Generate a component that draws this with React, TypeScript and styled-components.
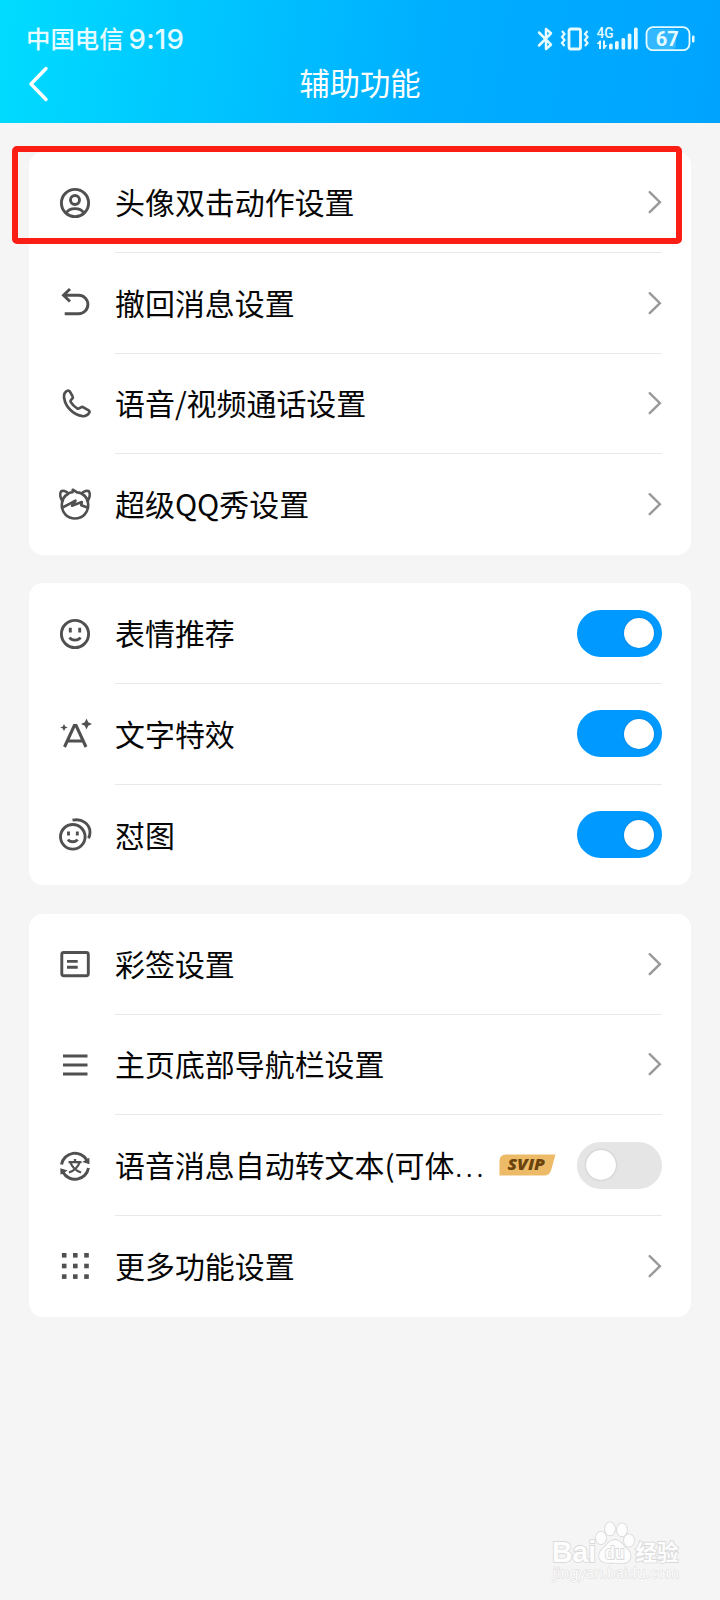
import React from 'react';
import styled, { createGlobalStyle } from 'styled-components';

const GlobalStyle = createGlobalStyle`
  * { box-sizing: border-box; }
  body {
    margin: 0;
    background: #f5f5f5;
    font-family: "Noto Sans CJK SC", "Noto Sans", sans-serif;
  }
`;

const Screen = styled.main`
  position: relative;
  width: 720px;
  height: 1600px;
  overflow: hidden;
  background: #f5f5f5;
`;

const Header = styled.header`
  height: 123px;
  color: #fff;
  background: linear-gradient(98deg, #00dcff 0%, #00c8ff 25%, #00adff 62%, #00a4ff 100%);
`;

const StatusBar = styled.div`
  display: flex;
  align-items: center;
  justify-content: space-between;
  height: 54px;
  padding: 24px 25px 0 26px;
  color: #e6fbff;
`;

const Carrier = styled.div`
  display: flex;
  align-items: center;
  height: 30px;
  padding-bottom: 2px;
  font-size: 24.4px;
  font-weight: 500;
  line-height: 30px;
`;

const Clock = styled.span`
  margin-left: 5px;
  font: 500 27.6px/30px Inter, sans-serif;
  padding-top: 2px;
  letter-spacing: 0.2px;
`;

const StatusIcons = styled.svg`
  width: 160px;
  height: 30px;
`;

const NavBar = styled.div`
  display: grid;
  grid-template-columns: 60px 1fr 60px;
  align-items: center;
  height: 60px;
`;

const BackButton = styled.button`
  display: flex;
  padding: 0 0 0 27px;
  border: 0;
  background: none;
  color: #fff;
`;

const Title = styled.h1`
  margin: 0;
  padding-bottom: 4px;
  font-size: 30.3px;
  font-weight: 400;
  line-height: 40px;
  text-align: center;
`;

const Groups = styled.div`
  display: flex;
  flex-direction: column;
  gap: 28.6px;
  padding: 29.3px 29px 0;
`;

const Card = styled.section`
  border-radius: 14px;
  background: #fff;
`;

const Row = styled.div`
  display: flex;
  align-items: center;
  height: 100.65px;
  padding-left: 28px;
`;

const RowIcon = styled.svg`
  flex: none;
  width: 36px;
  height: 36px;
  margin-right: 22px;
  fill: none;
  stroke: #505050;
  stroke-width: 2.9;
`;

const RowBody = styled.div<{ $last: boolean }>`
  display: flex;
  flex: 1;
  align-items: center;
  height: 100%;
  margin-right: 29px;
  border-bottom: 1px solid ${(p) => (p.$last ? 'transparent' : '#e9e9eb')};
`;

const Label = styled.span`
  flex: 1;
  padding-bottom: 2px;
  font-size: 29.95px;
  line-height: 44px;
  color: #060606;
  white-space: nowrap;
`;

const Dots = styled.span`
  margin-left: 1px;
  font-family: "Noto Sans", sans-serif;
  font-size: 24px;
  line-height: 1;
  letter-spacing: 4.2px;
`;

const Switch = styled.span<{ $on: boolean }>`
  display: flex;
  align-items: center;
  justify-content: ${(p) => (p.$on ? 'flex-end' : 'flex-start')};
  width: 85px;
  height: 47px;
  padding: 0 8px 0 8.5px;
  border-radius: 24px;
  background: ${(p) => (p.$on ? '#0099ff' : '#e5e5e5')};
`;

const Knob = styled.span`
  width: 30px;
  height: 30px;
  border-radius: 50%;
  background: #fff;
  box-shadow: 0 0 2px rgba(0, 0, 0, 0.25);
`;

const Badge = styled.svg`
  width: 57px;
  height: 22px;
  margin-right: 21px;
`;

const Highlight = styled.div`
  position: absolute;
  left: 12px;
  top: 146px;
  width: 670px;
  height: 98px;
  border: 6px solid #fa1e14;
  border-radius: 5px;
`;

const Watermark = styled.svg`
  position: absolute;
  left: 540px;
  top: 1510px;
  width: 150px;
  height: 75px;
`;

type IconName =
  | 'avatar' | 'undo' | 'phone' | 'show' | 'smile' | 'effect'
  | 'meme' | 'card' | 'menu' | 'voice' | 'grid';

const gridColumns = [7.2, 18.3, 29.5];
const gridRows = [7.3, 18, 28.6];

const icons: Record<IconName, React.ReactNode> = {
  avatar: (
    <>
      <circle cx="18" cy="18" r="13.6" />
      <circle cx="18" cy="15" r="4.5" />
      <path d="M9.2 28c1.6-3 5-4.400 8.800-4.400s7.200 1.400 8.800 4.400" />
    </>
  ),
  undo: <path d="M13 4 6.500 10.300 13 16.500M7 10.300h14.700a9.200 9.200 0 0 1 0 18.400H7.700" />,
  phone: (
    <path
      strokeWidth="2.7"
      strokeLinejoin="round"
      transform="translate(1.200 1.200)"
      d="M8.800 3.700c1.200-.6 2.200-.3 2.900.7l2.600 4.600c.6 1 .4 1.900-.4 2.700l-1.200 1.300c-.6.700-.5 1.300-.1 2 1.500 2.500 3.700 4.600 6.300 6.100.8.500 1.500.500 2.100 0l1.700-1c.8-.5 1.700-.5 2.500 0l5.200 3.100c1 .7 1.200 1.700.500 2.600-1.600 2.300-3.900 3.500-6.500 3.200C14.700 27.600 7.200 19.500 5.900 10.500c-.4-2.700.7-5.500 2.900-6.800z"
    />
  ),
  show: (
    <g strokeWidth="2.600" strokeLinejoin="round">
      <path d="M11.500 6.500C9 4.300 5.500 3 4 4.500c-1.500 2.200-1 7 2.300 10.500M24.500 6.500c2.500-2.200 6-3.500 7.500-2 1.500 2.200 1 7-2.300 10.500" />
      <path d="M11.500 6.500c1.500-.9 2.500-1.200 4-1.200l.3-2.600 4.200 2.700c1.500 0 3 .4 4.500 1.100 4 2.300 6.700 6.200 6.700 11.500 0 8-5.700 13.500-13.200 13.500S4.800 26 4.800 18c0-5.300 2.700-9.200 6.700-11.500z" />
      <path d="M5.500 20.500c3-1.500 8-4 13-6.800l-3.500 5 9.800-3.700-.5 3.200 6.200 2.300" />
    </g>
  ),
  smile: (
    <>
      <circle cx="18" cy="18" r="13.600" />
      <path d="M13.300 11.700v4.800M22.700 11.700v4.800M12.500 21.500c2.500 3.500 8.500 3.500 11 0" />
    </>
  ),
  effect: (
    <>
      <path strokeWidth="3.100" d="m7.500 31 9.800-21.500h1.800L29 31M10.800 25h14.800" />
      <path stroke="none" fill="#505050" d="m29.500 2.500 1.700 3.800L35 8l-3.800 1.700-1.700 3.800-1.700-3.800L24 8l3.800-1.700zM7 8l1.200 2.600 2.600 1-2.600 1L7 15.200l-1.200-2.600-2.600-1 2.600-1z" />
    </>
  ),
  meme: (
    <>
      <circle cx="15.800" cy="19.800" r="12.300" />
      <path d="M11.500 14.500v4M20.300 14.500v4M11 22.500c2 3 7.500 3 9.500 0M15.500 3.200c9.500-2.300 17.500 4 17.500 12 0 2.300-.5 4.300-1.500 6" />
    </>
  ),
  card: (
    <>
      <rect x="4.800" y="6.500" width="26.500" height="23.200" rx="2" />
      <path d="M10 15.400h10.700M10 21.200h10.700" />
    </>
  ),
  menu: <path d="M6 9h24.500M6 18h24.500M6 27h24.500" />,
  voice: (
    <>
      <path d="M4.500 16.500A13.700 13.700 0 0 1 30 12.300l1 2M31.500 20A13.700 13.700 0 0 1 6 24.200l-1-2" />
      <path stroke="none" fill="#505050" d="m32.300 9.800.2 6.500-7.200-2.300zM3.500 26.700l-.2-6.500 7.400 2.300z" />
      <path strokeWidth="2.300" d="M11.500 14.200h13M18 11v3M22.500 14.500c-1.500 4.500-5 8-10.500 10M13.500 14.500c1.500 4.500 5 8 10.500 10" />
    </>
  ),
  grid: (
    <g stroke="none" fill="#505050">
      {gridColumns.flatMap((x) =>
        gridRows.map((y) => <rect key={`${x}-${y}`} x={x - 2.3} y={y - 2.3} width="4.600" height="4.600" />),
      )}
    </g>
  ),
};

interface Item {
  icon: IconName;
  label: string;
  on?: boolean;
  truncated?: boolean;
  svip?: boolean;
}

const groups: Item[][] = [
  [
    { icon: 'avatar', label: '头像双击动作设置' },
    { icon: 'undo', label: '撤回消息设置' },
    { icon: 'phone', label: '语音/视频通话设置' },
    { icon: 'show', label: '超级QQ秀设置' },
  ],
  [
    { icon: 'smile', label: '表情推荐', on: true },
    { icon: 'effect', label: '文字特效', on: true },
    { icon: 'meme', label: '怼图', on: true },
  ],
  [
    { icon: 'card', label: '彩签设置' },
    { icon: 'menu', label: '主页底部导航栏设置' },
    { icon: 'voice', label: '语音消息自动转文本(可体', on: false, truncated: true, svip: true },
    { icon: 'grid', label: '更多功能设置' },
  ],
];

const Chevron = () => (
  <svg width="15" height="26" fill="none" stroke="#999" strokeWidth="2.400" strokeLinecap="round">
    <path d="m2.700 3.200 10.200 10-10.200 10" />
  </svg>
);

const SvipBadge = () => (
  <Badge>
    <path d="M7 0.500h49.500l-4.300 15.500q-1.500 5.500-7 5.500H0.500V7q0-6.500 6.500-6.500z" fill="#edbb68" />
    <text x="8.500" y="16.300" textLength="37.500" lengthAdjust="spacingAndGlyphs" fill="#6b430d" fontFamily="Open Sans, sans-serif" fontSize="15" fontWeight="800" fontStyle="italic">
      SVIP
    </text>
  </Badge>
);

const SettingRow = ({ item, last }: { item: Item; last: boolean }) => (
  <Row>
    <RowIcon viewBox="0 0 36 36">{icons[item.icon]}</RowIcon>
    <RowBody $last={last}>
      <Label>
        {item.label}
        {item.truncated && <Dots>...</Dots>}
      </Label>
      {item.svip && <SvipBadge />}
      {item.on === undefined ? (
        <Chevron />
      ) : (
        <Switch role="switch" aria-checked={item.on} $on={item.on}>
          <Knob />
        </Switch>
      )}
    </RowBody>
  </Row>
);

const bars = [
  [74, 6], [80, 8.5], [86.5, 11.5], [92.7, 16], [99, 22],
];

const StatusIndicators = () => (
  <StatusIcons viewBox="0 0 160 30" fill="none" stroke="#e6fbff">
    <path d="m4 8.500 12 12.200-5 4.300V5l5 4.300L4 21.500" strokeWidth="2.500" strokeLinejoin="round" strokeLinecap="round" />
    <rect x="34" y="5" width="11.500" height="20" rx="2" strokeWidth="2.800" />
    <path d="m27 7 2.500 3-2.500 3 2.500 3-2.500 3 2.500 3M52.500 7 50 10l2.500 3-2.500 3 2.500 3-2.500 3" strokeWidth="2.200" />
    <g stroke="none" fill="#e6fbff">
      <text x="61.500" y="14" fontFamily="Roboto, sans-serif" fontSize="14.500" fontWeight="500" textLength="17" lengthAdjust="spacingAndGlyphs">4G</text>
      <path d="m61.500 20 3.200-3.500h1.300V25h-2v-5zM68 16.500h2V21h2.500L69.300 25H68z" />
      {bars.map(([x, h]) => (
        <rect key={x} x={x} y={25.5 - h} width="3.700" height={h} rx="1.500" />
      ))}
    </g>
    <rect x="112" y="5" width="29" height="20" rx="4" fill="#fff" fillOpacity="0.200" stroke="none" />
    <rect x="111.500" y="3.200" width="43" height="23" rx="6.500" strokeWidth="1.800" />
    <rect x="157" y="11.500" width="2.500" height="7" rx="1" fill="#e6fbff" stroke="none" />
    <text x="120.700" y="22.200" fontFamily="Roboto, sans-serif" fontSize="21" fontWeight="700" textLength="23" lengthAdjust="spacingAndGlyphs" fill="#e6fbff" stroke="none">67</text>
  </StatusIcons>
);

const BrandMark = () => (
  <Watermark viewBox="0 0 150 75" fill="#fdfdfd" stroke="#dadada" strokeWidth="1.800" paintOrder="stroke">
    <text x="12" y="52" fontFamily="Liberation Sans, sans-serif" fontSize="29" fontWeight="700" textLength="44" lengthAdjust="spacingAndGlyphs">Bai</text>
    <ellipse cx="61" cy="28" rx="5" ry="6.200" />
    <ellipse cx="70" cy="18.800" rx="5" ry="6.500" />
    <ellipse cx="82" cy="19.800" rx="5" ry="6.500" />
    <ellipse cx="89" cy="30.500" rx="5" ry="6.200" />
    <path d="M75 30c5 0 7 4 10 7.500 4 3 7 6 5 11-2 6-8 4.200-15 4.200s-13.500 1-15.500-5c-1.500-5 2-7.700 5.500-10.700 3-3.500 5-7 10-7z" />
    <text x="65" y="48.500" fontFamily="Liberation Sans, sans-serif" fontSize="18" fontWeight="700" textLength="19.500" lengthAdjust="spacingAndGlyphs">du</text>
    <text x="95.500" y="49.500" fontFamily="Noto Sans CJK SC, sans-serif" fontSize="21.500" fontWeight="700">经验</text>
    <text x="13" y="68" fontFamily="Noto Sans, sans-serif" fontSize="14" textLength="126" lengthAdjust="spacingAndGlyphs" strokeWidth="1">jingyan.baidu.com</text>
  </Watermark>
);

export default function App() {
  return (
    <>
      <GlobalStyle />
      <Screen>
        <Header>
          <StatusBar>
            <Carrier>
              中国电信<Clock>9:19</Clock>
            </Carrier>
            <StatusIndicators />
          </StatusBar>
          <NavBar>
            <BackButton aria-label="返回">
              <svg width="24" height="36" fill="none" stroke="currentColor" strokeWidth="3.400" strokeLinecap="round" strokeLinejoin="round">
                <path d="M19 2.500 4 18l15 15.500" />
              </svg>
            </BackButton>
            <Title>辅助功能</Title>
          </NavBar>
        </Header>
        <Groups>
          {groups.map((items) => (
            <Card key={items[0].label}>
              {items.map((item, index) => (
                <SettingRow key={item.label} item={item} last={index === items.length - 1} />
              ))}
            </Card>
          ))}
        </Groups>
        <Highlight />
        <BrandMark />
      </Screen>
    </>
  );
}
